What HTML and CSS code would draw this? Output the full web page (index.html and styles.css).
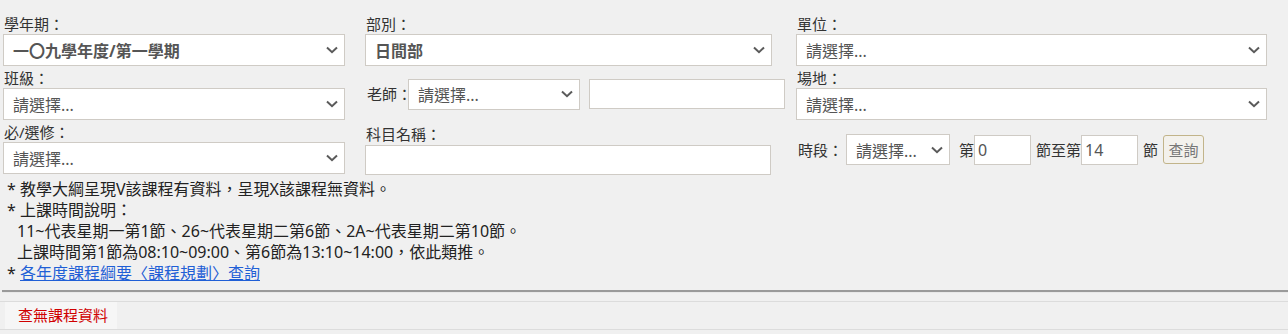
FILE: index.html
```html
<!DOCTYPE html>
<html lang="zh-Hant">
<head>
<meta charset="utf-8">
<title>課程查詢</title>
<link rel="stylesheet" href="styles.css">
</head>
<body>
<div class="filters">
  <div class="col col1">
    <div class="field">
      <div class="label">學年期：</div>
      <div class="select strong"><span>一〇九學年度/第一學期</span><svg class="chev" viewBox="0 0 12 8"><path d="M1 1.5 L6 6.2 L11 1.5"/></svg></div>
    </div>
    <div class="field">
      <div class="label">班級：</div>
      <div class="select"><span>請選擇...</span><svg class="chev" viewBox="0 0 12 8"><path d="M1 1.5 L6 6.2 L11 1.5"/></svg></div>
    </div>
    <div class="field">
      <div class="label">必/選修：</div>
      <div class="select"><span>請選擇...</span><svg class="chev" viewBox="0 0 12 8"><path d="M1 1.5 L6 6.2 L11 1.5"/></svg></div>
    </div>
  </div>
  <div class="col col2">
    <div class="field">
      <div class="label">部別：</div>
      <div class="select strong"><span>日間部</span><svg class="chev" viewBox="0 0 12 8"><path d="M1 1.5 L6 6.2 L11 1.5"/></svg></div>
    </div>
    <div class="inline teacher">
      <span class="label">老師：</span>
      <div class="select teacher-select"><span>請選擇...</span><svg class="chev" viewBox="0 0 12 8"><path d="M1 1.5 L6 6.2 L11 1.5"/></svg></div>
      <div class="textbox teacher-input"></div>
    </div>
    <div class="field subject">
      <div class="label">科目名稱：</div>
      <div class="textbox subject-input"></div>
    </div>
  </div>
  <div class="col col3">
    <div class="field">
      <div class="label">單位：</div>
      <div class="select"><span>請選擇...</span><svg class="chev" viewBox="0 0 12 8"><path d="M1 1.5 L6 6.2 L11 1.5"/></svg></div>
    </div>
    <div class="field">
      <div class="label">場地：</div>
      <div class="select"><span>請選擇...</span><svg class="chev" viewBox="0 0 12 8"><path d="M1 1.5 L6 6.2 L11 1.5"/></svg></div>
    </div>
    <div class="inline period">
      <span class="label">時段：</span>
      <div class="select period-select"><span>請選擇...</span><svg class="chev" viewBox="0 0 12 8"><path d="M1 1.5 L6 6.2 L11 1.5"/></svg></div>
      <span class="word first">第</span>
      <div class="textbox num">0</div>
      <span class="word">節至第</span>
      <div class="textbox num">14</div>
      <span class="word">節</span>
      <button class="btn" type="button">查詢</button>
    </div>
  </div>
</div>

<div class="notes">
  <div class="note">* 教學大綱呈現V該課程有資料，呈現X該課程無資料。</div>
  <div class="note">* 上課時間說明：</div>
  <div class="note indent">11~代表星期一第1節、26~代表星期二第6節、2A~代表星期二第10節。</div>
  <div class="note indent">上課時間第1節為08:10~09:00、第6節為13:10~14:00，依此類推。</div>
  <div class="note">* <a class="link" href="#">各年度課程綱要〈課程規劃〉查詢</a></div>
</div>

<hr class="rule">

<div class="result">
  <div class="result-cell">查無課程資料</div>
</div>
</body>
</html>
```

FILE: styles.css
```css
html, body {
  margin: 0;
  padding: 0;
  background: #f0f0f0;
}

body {
  font-family: "Noto Sans", "Noto Sans CJK TC", sans-serif;
  font-size: 15px;
  color: #333;
  padding-left: 3px;
}

.filters {
  display: flex;
  align-items: flex-start;
  padding-top: 14px;
}

.col {
  display: flex;
  flex-direction: column;
}

.col1 { width: 342px; }
.col2 { width: 407px; margin-left: 20px; }
.col3 { width: 471px; margin-left: 24px; }

.field {
  display: flex;
  flex-direction: column;
  margin-bottom: 2px;
}

.label {
  font-size: 15px;
  line-height: 20px;
  color: #333;
  padding-left: 1px;
  white-space: nowrap;
}

.select {
  box-sizing: border-box;
  height: 32px;
  background: #fff;
  border: 1px solid #cfcbc5;
  display: flex;
  align-items: center;
  justify-content: space-between;
  padding: 0 6px 0 9px;
  font-size: 16px;
  color: #555;
  white-space: nowrap;
}

.select.strong {
  font-weight: 700;
  color: #555;
}

.chev {
  width: 12px;
  height: 8px;
  flex: none;
  fill: none;
  stroke: #5a5a5a;
  stroke-width: 2;
}

.textbox {
  box-sizing: border-box;
  height: 30px;
  background: #fff;
  border: 1px solid #cfcbc5;
}

.inline {
  display: flex;
  align-items: center;
}

.inline > * {
  flex: none;
}

.teacher {
  margin-top: 10px;
  height: 32px;
}

.teacher .label {
  width: 43px;
  padding-left: 2px;
  box-sizing: border-box;
}

.teacher-select {
  width: 172px;
  height: 31px;
}

.teacher-input {
  width: 196px;
  margin-left: 9px;
}

.subject {
  margin-top: 14px;
}

.subject .label {
  line-height: 21px;
}

.subject-input {
  width: 406px;
}

.period {
  margin-top: 11px;
  height: 33px;
}

.period .label {
  width: 48px;
  padding-left: 2px;
}

.period-select {
  width: 104px;
  height: 31px;
}

.word {
  font-size: 15px;
  white-space: nowrap;
}

.word.first {
  margin-left: 9px;
}

.num {
  width: 57px;
  padding-left: 3px;
  font-size: 16px;
  line-height: 28px;
  color: #555;
  margin-right: 5px;
}

.btn {
  margin-left: 5px;
  width: 41px;
  height: 29px;
  padding: 0;
  border: 1px solid #c2b48a;
  border-radius: 3px;
  background: #f3f1ec;
  color: #777;
  font-family: "Noto Sans CJK TC", sans-serif;
  font-size: 15px;
  line-height: 27px;
}

.notes {
  margin-top: 2px;
  padding-left: 4px;
  font-size: 16px;
  line-height: 21px;
  color: #222;
}

.note.indent {
  padding-left: 10px;
}

.link {
  color: #1f5fd6;
  text-decoration: underline;
}

.rule {
  margin: 6px 0 0 -1px;
  height: 0;
  border: 0;
  border-top: 2px solid #9a9a9a;
  border-bottom: 1px solid #e8e8e8;
}

.result {
  margin-top: 8px;
  margin-left: -3px;
  border-top: 1px solid #dcdcdc;
  border-bottom: 1px solid #dcdcdc;
  padding-left: 5px;
}

.result-cell {
  display: inline-block;
  vertical-align: top;
  width: 112px;
  height: 27px;
  line-height: 27px;
  background: #f6f6f6;
  color: #d00000;
  padding-left: 13px;
  box-sizing: border-box;
  font-size: 15px;
}
```
